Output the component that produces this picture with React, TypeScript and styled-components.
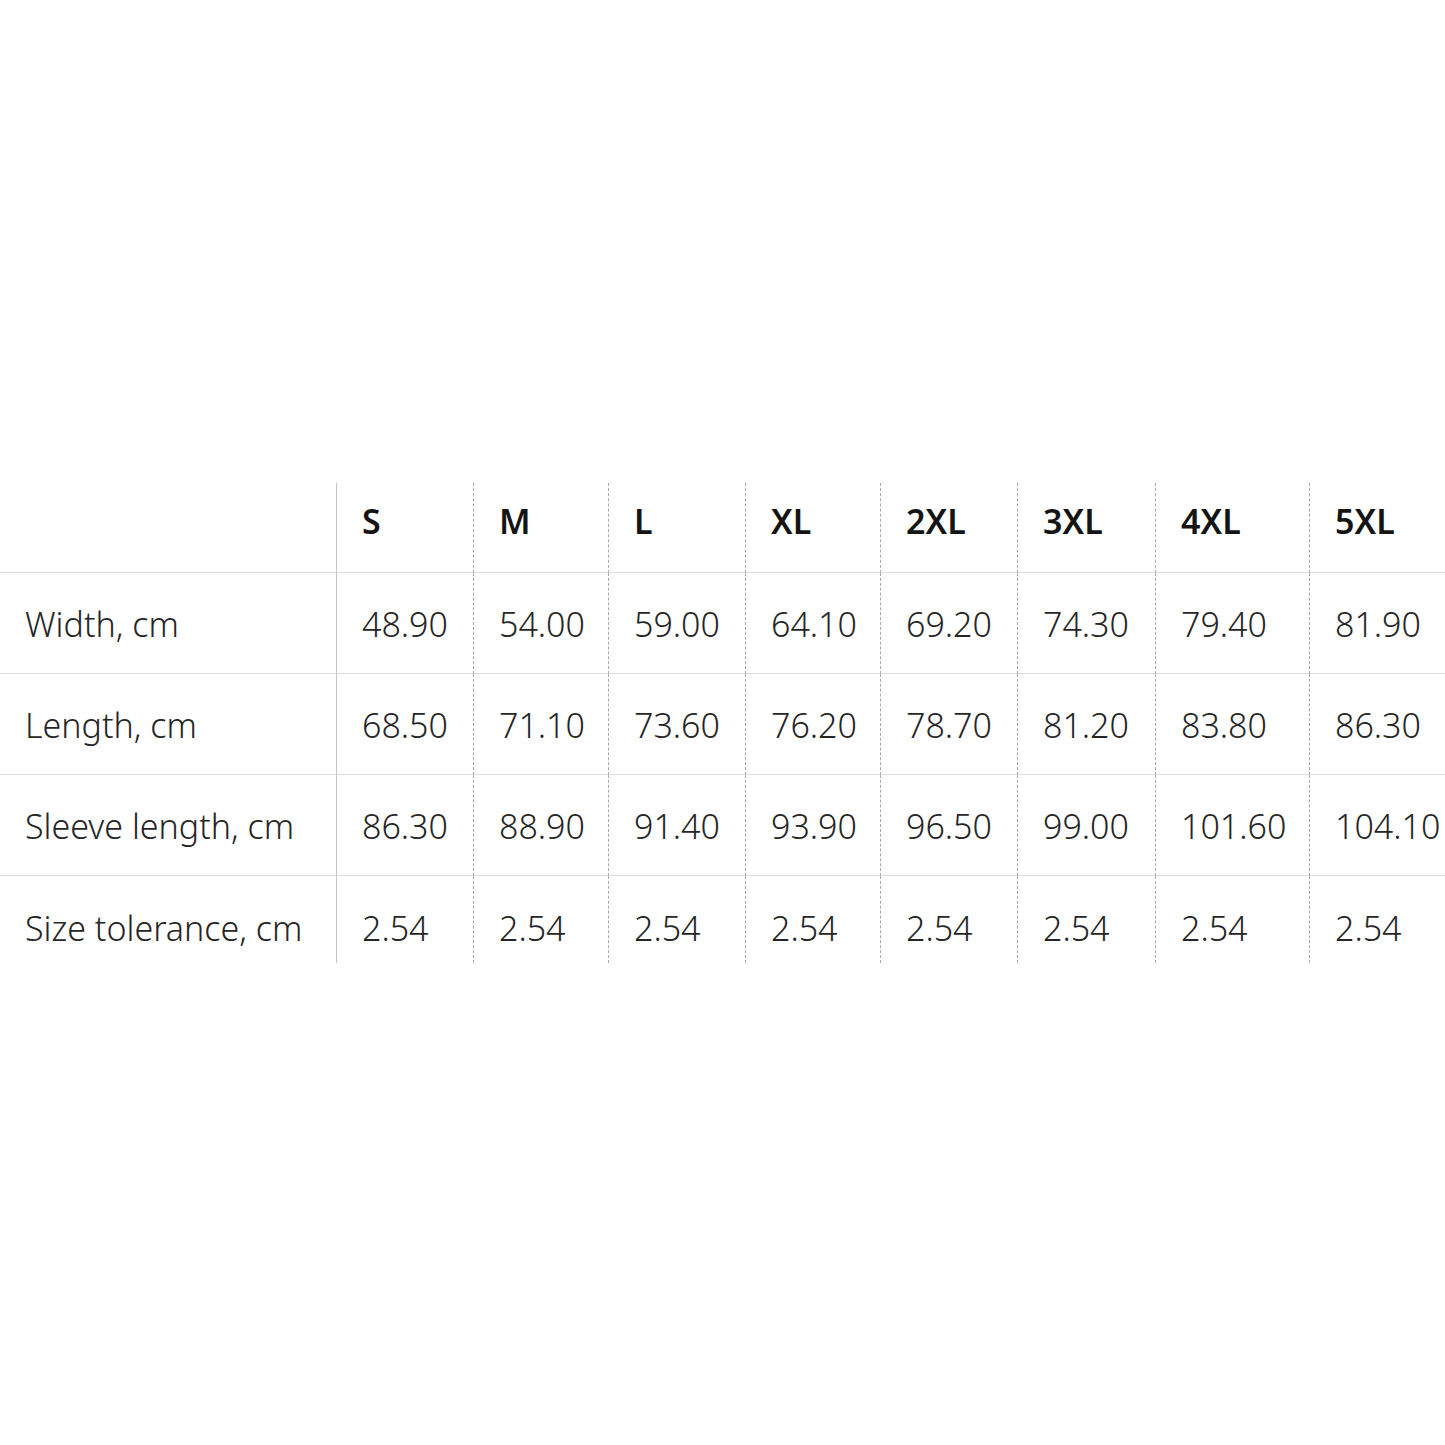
import React from 'react';
import styled, { createGlobalStyle } from 'styled-components';

const SIZES = ['S', 'M', 'L', 'XL', '2XL', '3XL', '4XL', '5XL'];

const ROWS = [
  { label: 'Width, cm', values: ['48.90', '54.00', '59.00', '64.10', '69.20', '74.30', '79.40', '81.90'] },
  { label: 'Length, cm', values: ['68.50', '71.10', '73.60', '76.20', '78.70', '81.20', '83.80', '86.30'] },
  { label: 'Sleeve length, cm', values: ['86.30', '88.90', '91.40', '93.90', '96.50', '99.00', '101.60', '104.10'] },
  { label: 'Size tolerance, cm', values: ['2.54', '2.54', '2.54', '2.54', '2.54', '2.54', '2.54', '2.54'] },
];

const GlobalStyle = createGlobalStyle`
  body {
    margin: 0;
    background: #ffffff;
    font-family: "Noto Sans", "Open Sans", sans-serif;
  }
`;

const Page = styled.div`
  width: 1445px;
  height: 1445px;
  padding-top: 483px;
  box-sizing: border-box;
  overflow: hidden;
`;

const Table = styled.div`
  display: grid;
  grid-template-columns: 336px 137px 135px 137px 135px 137px 138px 154px 136px;
`;

const Cell = styled.div<{ $col: number; $head?: boolean; $last?: boolean }>`
  height: ${(p) => (p.$head ? '90px' : p.$last ? '87px' : '101px')};
  padding: ${(p) => (p.$head ? '15px' : p.$last ? '29px' : '28px')} 0 0 25px;
  box-sizing: border-box;
  border-bottom: ${(p) => (p.$last ? 'none' : '1px solid #dcdcdc')};
  border-left: ${(p) =>
    p.$col === 0 ? 'none' : p.$col === 1 ? '1px solid #c4c4c4' : '1px dashed #a8a8a8'};
  font-size: 34px;
  line-height: 46px;
  font-weight: ${(p) => (p.$head ? 600 : 300)};
  color: ${(p) => (p.$head ? '#141414' : '#262626')};
  white-space: nowrap;
`;

export default function App() {
  return (
    <Page>
      <GlobalStyle />
      <Table>
        <Cell $col={0} $head />
        {SIZES.map((s, i) => (
          <Cell key={s} $col={i + 1} $head>
            {s}
          </Cell>
        ))}
        {ROWS.map((row, r) => (
          <React.Fragment key={row.label}>
            <Cell $col={0} $last={r === ROWS.length - 1}>
              {row.label}
            </Cell>
            {row.values.map((v, i) => (
              <Cell key={i} $col={i + 1} $last={r === ROWS.length - 1}>
                {v}
              </Cell>
            ))}
          </React.Fragment>
        ))}
      </Table>
    </Page>
  );
}
